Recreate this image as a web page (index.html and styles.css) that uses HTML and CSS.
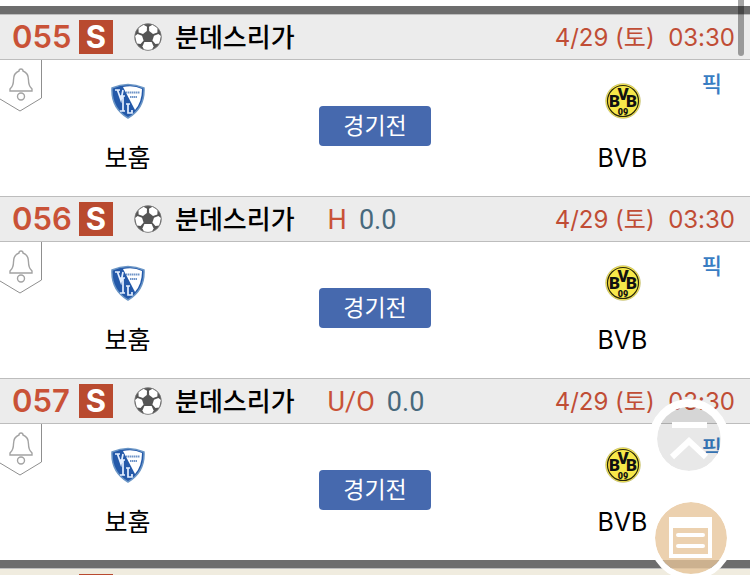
FILE: index.html
```
<!DOCTYPE html>
<html lang="ko">
<head>
<meta charset="utf-8">
<meta name="viewport" content="width=device-width, initial-scale=1">
<title>분데스리가</title>
<link rel="stylesheet" href="styles.css">
</head>
<body>
<svg class="defs" aria-hidden="true">
  <symbol id="ball" viewBox="0 0 28 28">
    <circle cx="14" cy="14" r="13.500" fill="#555"/>
    <g fill="#fff">
      <path d="M4.500 5 9.500 1.800 13 3.800 12.800 8 9 11 4.600 9.400Z"/>
      <path d="M23.500 5 18.500 1.800 15 3.800 15.200 8 19 11 23.400 9.400Z"/>
      <path d="M1 13 3.600 11 8 12.700 9.600 17.500 6.600 21 2.800 20.400Z"/>
      <path d="M27 13 24.400 11 20 12.700 18.400 17.500 21.400 21 25.200 20.400Z"/>
      <path d="M10.400 19H17.600L19.600 23.500 18 26.600Q14 27.600 10 26.600L8.400 23.500Z"/>
    </g>
    <circle cx="14" cy="14" r="13.300" fill="none" stroke="#888" stroke-width=".6"/>
  </symbol>
  <symbol id="bell" viewBox="0 0 42 52">
    <path d="M41.500 0V38L20 51 0 39" fill="#fff" stroke="#8f8f8f"/>
    <g fill="none" stroke="#a3a3a3" stroke-width="1.400">
      <path d="M19 11Q19 9 21 9T23 11Q28.500 13 28.500 20C28.500 26 30 27 32 29V31H10V29C12 27 13.500 26 13.500 20Q13.500 13 19 11Z"/>
      <circle cx="21" cy="36.500" r="3.500"/>
    </g>
  </symbol>
  <symbol id="bochum" viewBox="0 0 34 36">
    <path d="M1 5Q17-2 33 5Q34 25 17 35Q0 25 1 5Z" fill="#2459a9" stroke="#6b96c6" stroke-width="1.500"/>
    <path d="M12 4Q23 2 31 6Q31 19 24 27Z" fill="#fff"/>
    <path d="M4 7h5M6.500 7 10 17 12 7M12 13V28M9 13H14M9 28H14M15 21H19M17 21V30H21V27" fill="none" stroke="#e4efff" stroke-width="1.700"/>
    <path d="M15 9.500H29M19 14H26" stroke="#7095c8" stroke-width="2" stroke-dasharray="1.500 .5"/>
  </symbol>
  <symbol id="bvb" viewBox="0 0 36 36">
    <circle cx="18" cy="18" r="17.300" fill="#f7e84a" stroke="#bdb870" stroke-width=".7"/>
    <circle cx="18" cy="18" r="15.500" fill="none" stroke="#29270d" stroke-width="1.200"/>
    <g fill="#111" font-family="Roboto, sans-serif" font-weight="900" text-anchor="middle">
      <text x="9.500" y="24" font-size="17">B</text>
      <text x="18" y="17" font-size="17">V</text>
      <text x="26.500" y="24" font-size="17">B</text>
      <text x="18" y="32" font-size="9">09</text>
    </g>
  </symbol>
</svg>

<main class="list">
  <section class="group">
    <article class="match">
      <header class="head">
        <span class="number">055</span><span class="tag">S</span>
        <svg class="ball" aria-hidden="true"><use href="#ball"/></svg>
        <h2 class="league">분데스리가</h2>
        <time class="date">4/29 (토)&nbsp; 03:30</time>
      </header>
      <div class="body">
        <button class="alarm" aria-label="알림"><svg><use href="#bell"/></svg></button>
        <div class="team"><svg class="crest"><use href="#bochum"/></svg><span>보훔</span></div>
        <button class="status">경기전</button>
        <div class="team"><svg class="crest"><use href="#bvb"/></svg><span>BVB</span></div>
        <a class="pick" href="#">픽</a>
      </div>
    </article>
    <article class="match">
      <header class="head">
        <span class="number">056</span><span class="tag">S</span>
        <svg class="ball" aria-hidden="true"><use href="#ball"/></svg>
        <h2 class="league">분데스리가</h2>
        <span class="kind">H</span><span class="line">0.0</span>
        <time class="date">4/29 (토)&nbsp; 03:30</time>
      </header>
      <div class="body">
        <button class="alarm" aria-label="알림"><svg><use href="#bell"/></svg></button>
        <div class="team"><svg class="crest"><use href="#bochum"/></svg><span>보훔</span></div>
        <button class="status">경기전</button>
        <div class="team"><svg class="crest"><use href="#bvb"/></svg><span>BVB</span></div>
        <a class="pick" href="#">픽</a>
      </div>
    </article>
    <article class="match">
      <header class="head">
        <span class="number">057</span><span class="tag">S</span>
        <svg class="ball" aria-hidden="true"><use href="#ball"/></svg>
        <h2 class="league">분데스리가</h2>
        <span class="kind">U/O</span><span class="line">0.0</span>
        <time class="date">4/29 (토)&nbsp; 03:30</time>
      </header>
      <div class="body">
        <button class="alarm" aria-label="알림"><svg><use href="#bell"/></svg></button>
        <div class="team"><svg class="crest"><use href="#bochum"/></svg><span>보훔</span></div>
        <button class="status">경기전</button>
        <div class="team"><svg class="crest"><use href="#bvb"/></svg><span>BVB</span></div>
        <a class="pick" href="#">픽</a>
      </div>
    </article>
  </section>
  <section class="group">
    <div class="head head-next"><span class="number"></span><span class="tag"></span></div>
  </section>
</main>

<nav class="floating">
  <button class="float-button to-top" aria-label="맨 위로">
    <svg viewBox="0 0 64 64"><path d="M15 18H50M15 50 32 34 49 50" fill="none" stroke="#fff" stroke-width="6"/></svg>
  </button>
  <button class="float-button to-list" aria-label="목록">
    <svg viewBox="0 0 72 72"><path d="M14 15H57V56H14ZM18 26V52H53V26Z" fill="#fff" fill-rule="evenodd"/><path d="M23 33H48M23 44H48" stroke="#fff" stroke-width="4" stroke-linecap="round"/></svg>
  </button>
</nav>
<div class="scrollbar"></div>
</body>
</html>
```
FILE: styles.css
```
* {
  box-sizing: border-box;
}

body {
  margin: 0;
  height: 100vh;
  overflow: hidden;
  background: #fff;
  color: #000;
  font-family: Inter, "Noto Sans CJK KR", sans-serif;
}

button {
  border: 0;
  padding: 0;
  font: inherit;
}

svg {
  display: block;
}

.defs {
  position: absolute;
  width: 0;
  height: 0;
}

.list {
  height: 100%;
  padding-top: 6px;
  overflow: hidden;
}

.group {
  border-top: 8px solid #6d6d6d;
}

.head {
  display: flex;
  align-items: center;
  height: 46px;
  padding: 0 15px 0 12px;
  border: solid #bdbdbd;
  border-width: 1px 0;
  background: #ececec;
  line-height: 34px;
}

.head-next {
  background: #f0ecdf;
}

.number {
  min-width: 60px;
  margin-right: 7px;
  color: #c95237;
  font-size: 31px;
  font-weight: 600;
}

.tag {
  width: 34px;
  height: 34px;
  background: #b94a2f;
  color: #fff;
  font-size: 31px;
  font-weight: 700;
  text-align: center;
}

.ball {
  width: 28px;
  height: 28px;
  margin-left: 21px;
}

.league {
  margin: 0 0 0 13px;
  padding-top: 2px;
  font-size: 26px;
  font-weight: 500;
}

.kind,
.line {
  padding-top: 1px;
  font-family: Roboto, sans-serif;
  font-size: 27px;
}

.kind {
  margin-left: 33px;
  color: #c95237;
}

.line {
  margin-left: 12px;
  color: #48697c;
}

.date {
  margin-left: auto;
  padding-top: 2px;
  color: #c04d35;
  font-size: 24px;
}

.body {
  position: relative;
  display: grid;
  grid-template-columns: 34fr 32fr 34fr;
  align-items: start;
  height: 136px;
}

.alarm,
.alarm svg {
  width: 42px;
  height: 52px;
}

.alarm {
  position: absolute;
  top: 0;
  left: 0;
  background: none;
}

.team {
  display: flex;
  flex-direction: column;
  align-items: center;
  gap: 21px;
  padding-top: 23px;
  font-size: 25px;
  line-height: 36px;
}

.crest {
  width: 36px;
  height: 36px;
}

.status {
  justify-self: center;
  width: 112px;
  height: 40px;
  margin-top: 46px;
  border-radius: 4px;
  background: #4669ae;
  color: #fff;
  font-size: 23px;
  line-height: 40px;
}

.pick {
  position: absolute;
  top: 8px;
  right: 28px;
  color: #397dc3;
  font-size: 22px;
  font-weight: 500;
  line-height: 32px;
  text-decoration: none;
}

.floating {
  position: fixed;
  right: 17px;
  bottom: -5px;
  display: flex;
  flex-direction: column;
  align-items: flex-start;
  gap: 17px;
}

.float-button {
  border: 6px solid #fff;
  border-radius: 50%;
  background-clip: padding-box;
}

.to-top {
  width: 80px;
  height: 80px;
  border-width: 8px;
  background-color: rgb(0 0 0 / 9%);
}

.to-list {
  width: 84px;
  height: 84px;
  background-color: rgb(231 196 152 / 78%);
}

.float-button svg {
  width: 100%;
  height: 100%;
}

.scrollbar {
  position: fixed;
  top: -4px;
  right: 6px;
  width: 6px;
  height: 60px;
  border-radius: 3px;
  background: rgb(0 0 0 / 35%);
}
```
